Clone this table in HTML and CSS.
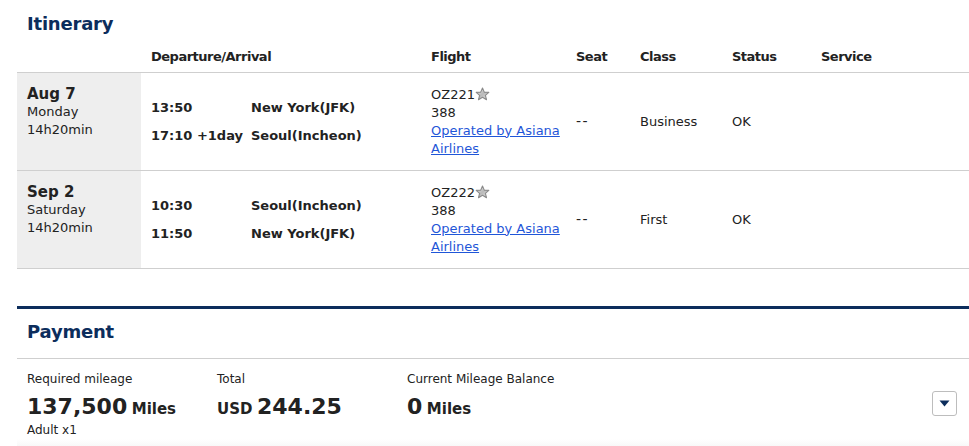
FILE: index.html
```html
<!DOCTYPE html>
<html lang="en">
<head>
<meta charset="utf-8">
<title>Itinerary</title>
<link rel="stylesheet" href="styles.css">
</head>
<body>
<div class="page">
  <section class="itinerary">
    <h2 class="title">Itinerary</h2>
    <table class="itin">
      <colgroup>
        <col class="c-date"><col class="c-route"><col class="c-flight"><col class="c-seat"><col class="c-class"><col class="c-status"><col class="c-service">
      </colgroup>
      <thead>
        <tr>
          <th></th><th>Departure/Arrival</th><th>Flight</th><th>Seat</th><th>Class</th><th>Status</th><th>Service</th>
        </tr>
      </thead>
      <tbody>
        <tr>
          <td class="date">
            <div class="day">Aug 7</div>
            <div>Monday</div>
            <div>14h20min</div>
          </td>
          <td class="route">
            <div class="leg"><span class="time">13:50</span><span class="city">New York(JFK)</span></div>
            <div class="leg"><span class="time">17:10 +1day</span><span class="city">Seoul(Incheon)</span></div>
          </td>
          <td class="flight">
            <div class="fno">OZ221<svg class="star" width="15" height="14" viewBox="0 0 15 14"><defs><linearGradient id="sg1" x1="0" y1="0" x2="1" y2="1"><stop offset="0" stop-color="#f6f6f6"/><stop offset="0.5" stop-color="#b9b9b9"/><stop offset="1" stop-color="#e2e2e2"/></linearGradient></defs><path d="M7.5 1 L9.3 5.1 L13.8 5.4 L10.4 8.3 L11.5 12.7 L7.5 10.3 L3.5 12.7 L4.6 8.3 L1.2 5.4 L5.7 5.1 Z" fill="url(#sg1)" stroke="#8a8a8a" stroke-width="1.1" stroke-linejoin="round"/></svg></div>
            <div>388</div>
            <a href="#" class="op">Operated by Asiana Airlines</a>
          </td>
          <td><span class="dash">--</span></td>
          <td>Business</td>
          <td>OK</td>
          <td></td>
        </tr>
        <tr>
          <td class="date">
            <div class="day">Sep 2</div>
            <div>Saturday</div>
            <div>14h20min</div>
          </td>
          <td class="route">
            <div class="leg"><span class="time">10:30</span><span class="city">Seoul(Incheon)</span></div>
            <div class="leg"><span class="time">11:50</span><span class="city">New York(JFK)</span></div>
          </td>
          <td class="flight">
            <div class="fno">OZ222<svg class="star" width="15" height="14" viewBox="0 0 15 14"><defs><linearGradient id="sg2" x1="0" y1="0" x2="1" y2="1"><stop offset="0" stop-color="#f6f6f6"/><stop offset="0.5" stop-color="#b9b9b9"/><stop offset="1" stop-color="#e2e2e2"/></linearGradient></defs><path d="M7.5 1 L9.3 5.1 L13.8 5.4 L10.4 8.3 L11.5 12.7 L7.5 10.3 L3.5 12.7 L4.6 8.3 L1.2 5.4 L5.7 5.1 Z" fill="url(#sg2)" stroke="#8a8a8a" stroke-width="1.1" stroke-linejoin="round"/></svg></div>
            <div>388</div>
            <a href="#" class="op">Operated by Asiana Airlines</a>
          </td>
          <td><span class="dash">--</span></td>
          <td>First</td>
          <td>OK</td>
          <td></td>
        </tr>
      </tbody>
    </table>
  </section>

  <section class="payment">
    <div class="pay-head">
      <h2 class="title">Payment</h2>
    </div>
    <div class="pay-body">
      <div class="pay-col">
        <div class="label">Required mileage</div>
        <div class="value"><span class="num">137,500</span> <span class="unit">Miles</span></div>
        <div class="note">Adult x1</div>
      </div>
      <div class="pay-col">
        <div class="label">Total</div>
        <div class="value"><span class="unit">USD</span> <span class="num">244.25</span></div>
      </div>
      <div class="pay-col">
        <div class="label">Current Mileage Balance</div>
        <div class="value"><span class="num">0</span> <span class="unit">Miles</span></div>
      </div>
      <button class="toggle" type="button" aria-label="More">
        <svg width="11" height="7" viewBox="0 0 11 7"><path d="M0.5 0.5 H10.5 L5.5 6.5 Z" fill="#0c2d5c"/></svg>
      </button>
    </div>
    <div class="pay-foot"></div>
  </section>
</div>
</body>
</html>
```

FILE: styles.css
```css
html, body {
  margin: 0;
  padding: 0;
  background: #fff;
  overflow: hidden;
}

body {
  font-family: "DejaVu Sans", Verdana, sans-serif;
  font-size: 13px;
  color: #222;
}

.page {
  padding-left: 17px;
}

.title {
  margin: 0;
  padding-left: 10px;
  font-size: 18px;
  line-height: 22px;
  font-weight: bold;
  color: #0c2d5c;
  letter-spacing: -0.2px;
}

.itinerary {
  padding-top: 13px;
}

.itinerary .title {
  margin-bottom: 6px;
}

.itin {
  width: 952px;
  border-collapse: collapse;
  table-layout: fixed;
}

.c-date { width: 124px; }
.c-route { width: 280px; }
.c-flight { width: 145px; }
.c-seat { width: 64px; }
.c-class { width: 92px; }
.c-status { width: 89px; }

.itin th {
  height: 31px;
  padding: 0 0 0 10px;
  text-align: left;
  font-weight: bold;
  letter-spacing: -0.5px;
  vertical-align: middle;
  border-bottom: 1px solid #cfcfcf;
  color: #222;
}

.itin td {
  height: 97px;
  padding: 0 0 0 10px;
  border-bottom: 1px solid #cfcfcf;
  vertical-align: middle;
  line-height: 18px;
}

.itin td.date {
  background: #eeeeee;
  vertical-align: top;
  padding-top: 12px;
  box-sizing: border-box;
}

.date .day {
  font-size: 15px;
  font-weight: bold;
}

.leg {
  display: flex;
  line-height: 28px;
  font-weight: bold;
}

.leg .time {
  width: 100px;
  flex: none;
}

.route {
  padding-bottom: 2px;
}

.fno {
  display: flex;
  align-items: flex-start;
}

.star {
  margin-top: 1px;
}

.op {
  color: #1f56d8;
  text-decoration: underline;
}

.dash {
  letter-spacing: 1.5px;
  font-size: 14px;
}

.payment {
  margin-top: 37px;
  border-top: 3px solid #0c2d5c;
  width: 952px;
}

.pay-head {
  padding: 12px 0 15px;
  border-bottom: 1px solid #cfcfcf;
}

.pay-body {
  display: flex;
  align-items: flex-start;
  padding: 12px 12px 1px 10px;
}

.pay-col {
  width: 190px;
}

.label {
  font-size: 12px;
  line-height: 16px;
}

.value {
  margin-top: 7px;
  line-height: 25px;
  font-weight: bold;
  white-space: nowrap;
}

.num {
  font-size: 22px;
}

.unit {
  font-size: 15px;
}

.note {
  font-size: 12px;
  line-height: 16px;
  margin-top: 0;
}

.toggle {
  margin-left: auto;
  margin-top: 20px;
  width: 25px;
  height: 25px;
  padding: 0;
  border: 1px solid #bdbdbd;
  border-radius: 3px;
  background: #fff;
  display: flex;
  align-items: center;
  justify-content: center;
}

.pay-foot {
  height: 12px;
  background: linear-gradient(#ffffff, #f3f3f3);
}
```
